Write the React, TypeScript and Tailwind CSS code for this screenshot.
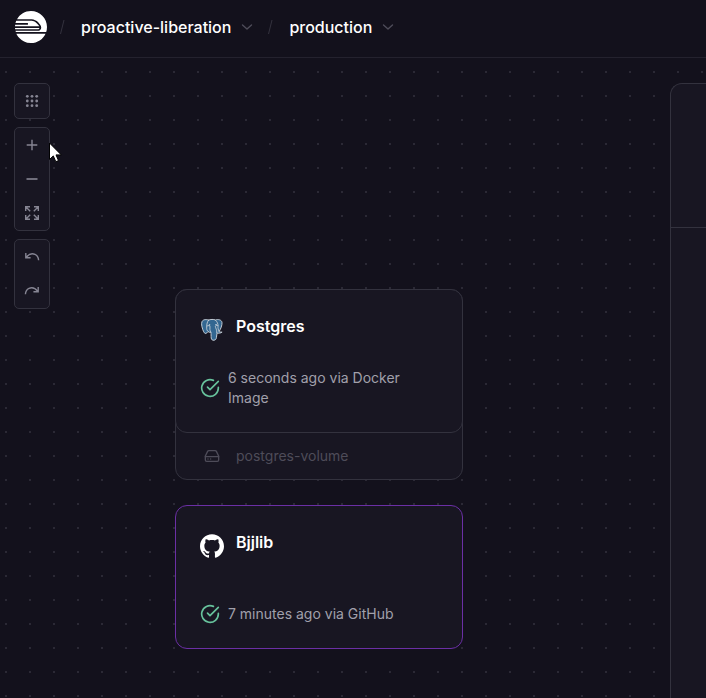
import React from "react";
import { SiRailway, SiGithub } from "react-icons/si";

type IconProps = { className?: string };

function Slash() {
  return (
    <svg className="h-4 w-[10px] shrink-0" viewBox="0 0 10 16" fill="none" aria-hidden="true">
      <path d="M5 1 1.5 15" stroke="#33323e" strokeWidth="1" />
    </svg>
  );
}

function Chevron() {
  return (
    <svg className="size-4 shrink-0" viewBox="0 0 16 16" fill="none" aria-hidden="true">
      <path d="m3.5 6 4.5 4 4.5-4" stroke="#4e4c59" strokeWidth="1.4" strokeLinecap="round" strokeLinejoin="round" />
    </svg>
  );
}

function GridIcon() {
  const steps = [3.3, 8, 12.7];
  return (
    <svg className="size-4" viewBox="0 0 16 16" fill="currentColor" aria-hidden="true">
      {steps.map((y) => steps.map((x) => <circle key={`${x}-${y}`} cx={x} cy={y} r="1.4" />))}
    </svg>
  );
}

function StrokeIcon({ d, width = 1.4 }: { d: string; width?: number }) {
  return (
    <svg
      className="size-4"
      viewBox="0 0 16 16"
      fill="none"
      stroke="currentColor"
      strokeWidth={width}
      aria-hidden="true"
    >
      <path d={d} />
    </svg>
  );
}

function CheckIcon() {
  return (
    <svg
      className="size-5 shrink-0 text-[#67c29c]"
      viewBox="0 0 24 24"
      fill="none"
      stroke="currentColor"
      strokeWidth="2"
      strokeLinecap="round"
      strokeLinejoin="round"
      aria-hidden="true"
    >
      <path d="M22 11.08V12a10 10 0 1 1-5.93-9.14" />
      <path d="m22 4-10 10.01-3-3" />
    </svg>
  );
}

function DriveIcon() {
  return (
    <svg
      className="size-4"
      viewBox="0 0 24 24"
      fill="none"
      stroke="currentColor"
      strokeWidth="2"
      strokeLinecap="round"
      strokeLinejoin="round"
      aria-hidden="true"
    >
      <path d="M2 13h20" />
      <path d="M5.45 5.11 2 12v6a2 2 0 0 0 2 2h16a2 2 0 0 0 2-2v-6l-3.45-6.89A2 2 0 0 0 16.76 4H7.24a2 2 0 0 0-1.79 1.11z" />
      <path d="M6 16.5h.01M10 16.5h.01" />
    </svg>
  );
}

function PostgresIcon({ className }: IconProps) {
  return (
    <svg className={className} viewBox="0 0 24 24" fill="none" strokeLinecap="round" strokeLinejoin="round" aria-hidden="true">
      <path
        d="M8.6 2.1C6.800 1.400 3.400 1 2 3.600c-1.100 2.300.3 7.400 1.700 10.200.8 1.600 1.900 2.300 3.100 1.100l1.300-1.400c.6.600 1.600 1 2.800.9.300 1.200.1 3.700.3 5.600.2 1.700 1.300 2.500 2.900 2.200 1.500-.3 2.100-1.100 2.300-2.500l.6-4.600c1.700.3 3.600.1 5.100-1-1.100-.1-2.600.1-3-.6 1.700-2.600 3.100-6.300 2.900-8.900C21.800 1.700 17.900 1 15.400 2c-1.700-.8-5-.8-6.800.1Z"
        fill="#336791"
        stroke="#c3ccd5"
        strokeWidth="1"
      />
      <path
        d="M8.600 2.200C6.500 4 6.800 8 6.700 10.200c0 1.400.4 2.600 1.400 3.300M15.300 2c2 1.600 2.900 4 2.700 6.200-.1 1.900.1 3.100 1 5.200M6.900 8.100c1.400-.9 3-.7 3.100.6.1 1.400-.7 3.700.9 5.500M18 7.600c-1.100-.5-2.500-.2-2.600.8-.1 1.600 1.900 3.500 1.400 6.200"
        stroke="#c3ccd5"
        strokeWidth="0.9"
      />
      <path d="M9.300 6.900h.5M15.800 6.700h.5" stroke="#ffffff" strokeWidth="0.9" />
    </svg>
  );
}

function Crumb({ label }: { label: string }) {
  return (
    <button type="button" className="flex items-center gap-2 text-base font-medium whitespace-nowrap text-white">
      {label}
      <Chevron />
    </button>
  );
}

function ToolGroup({ children }: { children: React.ReactNode }) {
  return (
    <div className="flex flex-col rounded-[5px] border border-[#33323e] bg-[#181622] text-[#868593]">{children}</div>
  );
}

function ToolButton({ label, children }: { label: string; children: React.ReactNode }) {
  return (
    <button type="button" aria-label={label} className="flex size-[34px] items-center justify-center">
      {children}
    </button>
  );
}

type ServiceProps = { name: string; icon: React.ReactNode; status: string; border: string };

function ServiceCard({ name, icon, status, border }: ServiceProps) {
  return (
    <article className={`flex h-36 flex-col justify-between rounded-xl border bg-[#181622] p-6 ${border}`}>
      <div className="flex items-start gap-3">
        <span className="mt-1">{icon}</span>
        <h2 className="text-base font-semibold text-white">{name}</h2>
      </div>
      <div className="flex items-center gap-2">
        <CheckIcon />
        <p className="text-sm text-[#a1a0ab]">{status}</p>
      </div>
    </article>
  );
}

export default function App() {
  return (
    <div className="flex h-screen flex-col overflow-hidden bg-[#13111c] font-['Inter',sans-serif]">
      <header className="flex items-center gap-3 border-b border-[#24222e] pt-[11px] pr-4 pb-[14px] pl-[15px]">
        <a href="#" aria-label="Railway" className="text-white">
          <SiRailway className="size-8" />
        </a>
        <Slash />
        <Crumb label="proactive-liberation" />
        <Slash />
        <Crumb label="production" />
      </header>

      <main className="relative flex flex-1 items-start justify-between overflow-hidden">
        <svg className="absolute inset-0 size-full" aria-hidden="true">
          <defs>
            <pattern id="dots" x="5" y="13" width="24" height="24" patternUnits="userSpaceOnUse">
              <rect width="2" height="2" fill="#2b2935" />
            </pattern>
          </defs>
          <rect width="100%" height="100%" fill="url(#dots)" />
        </svg>

        <nav aria-label="Canvas tools" className="relative mt-[25px] ml-[14px] flex flex-col gap-2">
          <ToolGroup>
            <ToolButton label="Grid">
              <GridIcon />
            </ToolButton>
          </ToolGroup>
          <ToolGroup>
            <ToolButton label="Zoom in">
              <StrokeIcon d="M8 2.700v10.600M2.700 8h10.600" />
            </ToolButton>
            <ToolButton label="Zoom out">
              <StrokeIcon d="M2.500 8h11" width={1.6} />
            </ToolButton>
            <ToolButton label="Fit view">
              <StrokeIcon d="M1.700 6V1.700H6M2 2l4.200 4.200M10 1.700h4.300V6M14 2 9.800 6.200M1.700 10v4.300H6M2 14l4.200-4.200M14.300 10v4.300H10M14 14 9.800 9.800" />
            </ToolButton>
          </ToolGroup>
          <ToolGroup>
            <ToolButton label="Undo">
              <StrokeIcon d="M1.800 4v4.800h4.800M2.200 8.400C5 4.800 8.300 4.200 11 5.400c2.200 1 3.400 3 3.600 5.800" />
            </ToolButton>
            <ToolButton label="Redo">
              <StrokeIcon d="M14.200 4v4.800H9.400M13.800 8.400C11 4.800 7.700 4.200 5 5.400c-2.200 1-3.400 3-3.600 5.800" />
            </ToolButton>
          </ToolGroup>
        </nav>

        <section className="absolute top-[231px] left-[175px] w-72 rounded-xl bg-[#181622]">
          <div className="rounded-xl border border-[#33323e]">
            <div className="-m-px">
              <ServiceCard
                name="Postgres"
                icon={<PostgresIcon className="size-6" />}
                status="6 seconds ago via Docker Image"
                border="border-[#33323e]"
              />
            </div>
            <div className="flex h-[47px] items-center gap-4 pl-7 text-[#4e4c59]">
              <DriveIcon />
              <span className="text-sm">postgres-volume</span>
            </div>
          </div>
        </section>

        <section className="absolute top-[447px] left-[175px] w-72">
          <ServiceCard
            name="Bjjlib"
            icon={<SiGithub className="size-6 text-white" />}
            status="7 minutes ago via GitHub"
            border="border-[#6b2fa5]"
          />
        </section>

        <aside className="relative mt-[25px] w-9 self-stretch rounded-tl-xl border-t border-l border-[#33323e] bg-[#181622]">
          <div className="h-36 border-b border-[#33323e]" />
        </aside>

        <svg className="absolute top-[84px] left-[48px] h-6 w-4" viewBox="0 0 16 24" aria-hidden="true">
          <path
            d="M1.500 1v16.500l3.800-3.600 2.500 5.800 2.700-1.100-2.500-5.700h5.300Z"
            fill="#ffffff"
            stroke="#000000"
            strokeWidth="1"
          />
        </svg>
      </main>
    </div>
  );
}
